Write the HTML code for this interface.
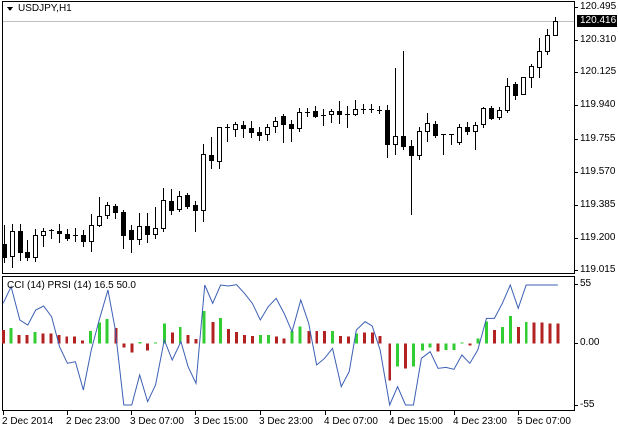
<!DOCTYPE html>
<html><head><meta charset="utf-8"><style>
body{margin:0;width:618px;height:430px;background:#fff;overflow:hidden;position:relative;font-family:"Liberation Sans",sans-serif;}
.l{position:absolute;font-size:10px;color:#000;line-height:12px;white-space:nowrap}
</style></head><body>
<svg id="s" width="618" height="430" style="position:absolute;left:0;top:0" shape-rendering="crispEdges">
<rect x="2.5" y="1.5" width="572" height="272" fill="none" stroke="#000"/>
<rect x="2.5" y="276.5" width="572" height="134" fill="none" stroke="#000"/>
<line x1="3" y1="21.5" x2="574" y2="21.5" stroke="#c0c0c0"/>
<polygon points="7,7 13,7 10,11" fill="#000"/>
<g id="c"></g>
<g id="ind" transform="translate(0,270) scale(0.3968,0.33333)"></g>
<g id="t" stroke="#000"></g>
<rect x="577" y="15" width="40" height="12" fill="#000"/>
</svg>
<div class="l" style="left:18px;top:3px">USDJPY,H1</div>
<div class="l" style="left:7px;top:280px">CCI (14) PRSI (14) 16.5 50.0</div>
<div id="lab"></div>
<script>
var NS="http://www.w3.org/2000/svg";
function el(p,n,a){var e=document.createElementNS(NS,n);for(var k in a)e.setAttribute(k,a[k]);p.appendChild(e);return e;}
var C=[[4,'b',244,257,225,262],[12,'w',231,256,224,267],[20,'b',231,252,224,260],[27,'b',252,257,240,260],[35,'w',235,257,229,261],[43,'w',231,235,228,246],[51,'x',230,230,229,238],[59,'b',231,233,224,242],[67,'b',234,238,229,240],[75,'x',235,235,228,241],[83,'b',235,241,230,246],[91,'w',225,241,214,251],[99,'w',216,225,197,226],[107,'w',205,215,202,218],[115,'b',206,212,204,218],[123,'b',212,235,210,248],[131,'b',230,239,225,252],[139,'w',226,239,213,244],[147,'b',226,234,213,242],[155,'w',228,234,207,238],[163,'w',200,228,188,231],[171,'b',201,210,189,214],[179,'w',196,209,191,211],[187,'b',195,206,193,208],[195,'b',205,210,201,231],[203,'w',154,210,144,221],[211,'b',155,160,137,168],[219,'w',127,161,127,168],[227,'x',127,127,124,141],[235,'w',124,129,122,136],[243,'b',125,128,121,137],[251,'b',128,132,121,137],[259,'b',132,135,127,140],[267,'w',127,134,124,140],[275,'w',121,126,117,132],[283,'b',116,124,114,142],[291,'b',124,128,120,141],[299,'w',112,128,108,131],[307,'x',112,112,108,116],[315,'b',111,116,106,117],[323,'x',115,115,109,125],[331,'w',111,114,109,122],[339,'b',111,114,101,123],[347,'x',114,114,106,127],[355,'w',109,114,100,115],[363,'x',109,109,104,113],[371,'x',109,109,104,112],[379,'x',110,110,106,113],[387,'b',110,144,105,157],[395,'w',136,144,68,154],[403,'b',136,146,51,149],[411,'b',146,155,140,214],[419,'w',131,155,127,159],[427,'w',123,131,113,141],[435,'b',124,135,121,137],[443,'x',134,134,134,154],[451,'x',134,134,134,144],[459,'w',127,142,124,144],[467,'b',127,131,122,134],[475,'w',125,131,122,149],[483,'w',108,124,107,127],[491,'b',108,118,106,119],[499,'w',110,117,107,119],[507,'w',86,110,78,112],[515,'b',84,95,82,99],[523,'w',77,94,77,94],[531,'w',66,77,64,87],[539,'w',51,67,38,77],[547,'w',35,51,29,54],[555,'w',21,35,17,35]];
var g=document.getElementById('c');
C.forEach(function(c){var x=c[0];
el(g,'line',{x1:x+.5,x2:x+.5,y1:c[4],y2:c[5]+1,stroke:'#000'});
if(c[1]=='x')el(g,'line',{x1:x-2,x2:x+3,y1:c[2]+.5,y2:c[2]+.5,stroke:'#000'});
else el(g,'rect',{x:x-1.5,y:c[2]+.5,width:4,height:c[3]-c[2],fill:c[1]=='b'?'#000':'#fff',stroke:'#000'});});
var B=[[8,'r',180],[28,'g',174],[48,'r',195],[68,'r',195],[88,'g',186],[108,'r',190],[128,'r',190],[148,'r',195],[168,'r',200],[188,'r',200],[208,'r',212],[228,'g',183],[250,'g',158],[270,'g',147],[292,'r',174],[312,'r',232],[332,'r',247],[352,'g',216],[372,'r',242],[392,'g',218],[414,'g',160],[434,'r',188],[454,'g',171],[474,'r',195],[494,'r',207],[514,'g',123],[536,'r',156],[556,'g',144],[576,'r',177],[596,'r',186],[616,'r',195],[636,'r',198],[656,'g',195],[676,'g',195],[696,'r',200],[716,'r',206],[736,'g',183],[756,'g',170],[778,'r',183],[798,'r',183],[818,'r',183],[838,'g',183],[858,'r',198],[878,'r',200],[898,'g',190],[918,'r',188],[938,'r',188],[958,'r',198],[982,'r',332],[1002,'g',290],[1022,'r',296],[1042,'g',290],[1064,'g',242],[1084,'g',232],[1104,'r',245],[1124,'g',240],[1144,'g',240],[1164,'g',218],[1184,'r',226],[1204,'g',205],[1226,'g',155],[1246,'r',180],[1266,'g',171],[1286,'g',138],[1306,'r',171],[1326,'g',156],[1346,'r',158],[1366,'r',158],[1386,'r',160],[1406,'r',160]];
var ig=document.getElementById('ind');
B.forEach(function(b){var y=b[2],t=Math.min(y,220),h=Math.abs(220-y);
el(ig,'rect',{x:b[0]-3.5,y:t,width:7.5,height:h,fill:b[1]=='r'?'#b22222':'#32cd32'});});
var P=[[8,100],[28,50],[50,150],[70,165],[90,120],[110,108],[130,140],[150,230],[170,280],[190,275],[210,360],[230,240],[250,150],[272,60],[290,175],[312,405],[332,405],[352,315],[372,395],[392,345],[414,210],[434,270],[456,215],[474,290],[494,340],[516,45],[536,100],[556,45],[576,48],[596,44],[616,70],[636,100],[656,150],[676,110],[696,85],[716,130],[736,185],[758,90],[778,160],[798,285],[818,265],[838,235],[860,350],[880,305],[898,180],[920,155],[938,168],[958,240],[982,405],[1002,350],[1022,405],[1042,405],[1062,265],[1084,245],[1104,295],[1124,292],[1144,298],[1164,255],[1184,280],[1204,240],[1226,145],[1246,145],[1266,100],[1286,45],[1306,115],[1326,45],[1406,45]];
el(ig,'polyline',{points:P.map(function(p){return p.join(',')}).join(' '),fill:'none',stroke:'#3c5fb4','stroke-width':1,'vector-effect':'non-scaling-stroke','shape-rendering':'auto'});
var tg=document.getElementById('t'),lab=document.getElementById('lab'),h='';
var PR=[['120.495',7],['120.416',21],['120.310',40],['120.125',72],['119.940',105],['119.755',139],['119.570',172],['119.385',205],['119.200',238],['119.015',270],['55',284],['0.00',343],['-55',405]];
PR.forEach(function(p){if(p[0]!='120.416')el(tg,'line',{x1:575,x2:578,y1:p[1]+.5,y2:p[1]+.5});
h+='<div class="l" style="left:580px;top:'+(p[1]-6)+'px;'+(p[0]=='120.416'?'color:#fff':'')+'">'+p[0]+'</div>';});
var T=[['2 Dec 2014',3],['2 Dec 23:00',67],['3 Dec 07:00',131],['3 Dec 15:00',195],['3 Dec 23:00',260],['4 Dec 07:00',325],['4 Dec 15:00',390],['4 Dec 23:00',454],['5 Dec 07:00',518]];
T.forEach(function(t){el(tg,'line',{x1:t[1]+.5,x2:t[1]+.5,y1:411,y2:415});
h+='<div class="l" style="left:'+(t[1]-1)+'px;top:416px">'+t[0]+'</div>';});
lab.innerHTML=h;
</script>
</body></html>
